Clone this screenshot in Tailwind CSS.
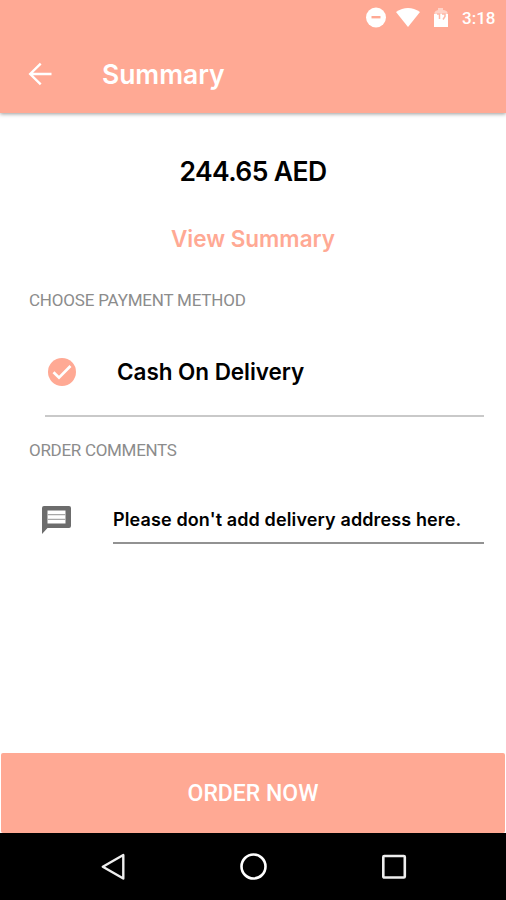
<!DOCTYPE html>
<html lang="en">
<head>
<meta charset="utf-8">
<title>Summary</title>
<script src="https://cdn.jsdelivr.net/npm/@tailwindcss/browser@4"></script>
</head>
<body class="bg-white">
<div class="flex h-[900px] w-[506px] flex-col overflow-hidden bg-white font-['Roboto',sans-serif] text-black">
  <header class="h-[113px] shrink-0 bg-[#ffa994] text-white shadow-[0_1px_4px_rgba(0,0,0,0.4)]">
    <div class="flex h-9 items-center pl-[366px]">
      <svg class="h-5 w-5 shrink-0 overflow-visible" viewBox="0 0 20 20"><circle cx="10" cy="9.500" r="10" fill="#fff"/><path d="M5.500 9.200h9" stroke="#ffa994" stroke-width="2.400"/></svg>
      <svg class="ml-[9px] h-5 w-[26px] shrink-0" viewBox="0 0 26 20"><path d="M1 4Q13-4 25 4L13 19Z" fill="#fff"/></svg>
      <svg class="ml-[12px] h-5 w-4 shrink-0" viewBox="0 0 16 20"><path d="M1.500 7V4.500Q2 2.500 5 2V0h5v2q4 .5 4.500 2.500V7Z" fill="#ffd2c7"/><path d="M1 6h14v13H1Z" fill="#fff"/><path d="M4 6h2.500v5M9 6h3v2.500l-2 3" fill="none" stroke="#ffb8a7" stroke-width="1.500"/></svg>
      <span class="ml-[13px] text-[17px] font-medium leading-none">3:18</span>
    </div>
    <div class="flex h-[77px] items-center pl-[28px]">
      <svg class="mb-[2px] h-6 w-6 shrink-0" viewBox="0 0 24 24" fill="none" stroke="#fff" stroke-width="2.400"><path d="M23.500 12H2M12.700 1.700L2.200 12l10.500 10.300"/></svg>
      <h1 class="ml-[50px] font-['Inter',sans-serif] text-[26.500px] font-semibold leading-none tracking-[-0.050px]">Summary</h1>
    </div>
  </header>
  <main class="flex flex-1 flex-col">
    <p class="mt-[42px] text-center font-['Inter',sans-serif] text-[26.500px] font-semibold leading-8 tracking-[-0.600px]">244.65 AED</p>
    <div class="mt-[36px] text-center font-['Inter',sans-serif] text-[22.500px] font-semibold leading-8 text-[#ffa994]"><span>View Summary</span></div>
    <h2 class="mt-[35px] pl-[29px] text-[17px] leading-5 tracking-[-0.200px] text-[#8c8c8c]"><span>CHOOSE PAYMENT METHOD</span></h2>
    <div class="ml-[45px] mr-[22px] mt-[19px] flex h-[88px] items-center border-b-2 border-[#c9c9c9] pl-[3px]">
      <svg class="h-7 w-7 shrink-0" viewBox="0 0 28 28"><circle cx="14" cy="14" r="14" fill="#ffa994"/><path d="M5.500 14.200l5.500 5.500L22.500 8" fill="none" stroke="#fff" stroke-width="2.700"/></svg>
      <span class="ml-[41px] font-['Inter',sans-serif] text-[22.500px] font-semibold leading-none tracking-[-0.050px]">Cash On Delivery</span>
    </div>
    <h2 class="mt-[23px] pl-[29px] text-[17px] leading-5 tracking-[-0.300px] text-[#8c8c8c]"><span>ORDER COMMENTS</span></h2>
    <div class="ml-[42px] mr-[22px] mt-[34px] flex h-[50px]">
      <svg class="mt-[12px] h-7 w-[29px] shrink-0" viewBox="0 0 29 28"><path d="M2 0h25q2 0 2 2v18q0 2-2 2H5.500L0 28V2q0-2 2-2Z" fill="#6c6c6c"/><path d="M5.500 4.500h18v13h-18Z" fill="#fff"/><path d="M5.500 8.700h18M5.500 13.300h18" stroke="#a8a8a8" stroke-width="1.300"/></svg>
      <div class="ml-[42px] flex flex-1 items-center border-b-2 border-[#929292] pt-[4px] font-['Inter',sans-serif] text-[18px] font-semibold leading-none tracking-[0.120px]"><span>Please don't add delivery address here.</span></div>
    </div>
  </main>
  <button class="mx-px h-[80px] shrink-0 rounded-[2px] bg-[#ffa994] pt-[2px] text-[23px] font-medium text-white">ORDER NOW</button>
  <nav class="flex h-[67px] shrink-0 items-center justify-center gap-[113px] bg-black">
    <svg class="h-7 w-7" viewBox="0 0 28 28" fill="none" stroke="#eee" stroke-width="2.400" stroke-linejoin="round"><path d="M25.300 2v23.500L4.800 13.700Z"/></svg>
    <svg class="h-7 w-7" viewBox="0 0 28 28" fill="none" stroke="#fff" stroke-width="2.600"><circle cx="14.500" cy="13.500" r="12"/></svg>
    <svg class="h-7 w-7" viewBox="0 0 28 28" fill="none" stroke="#eee" stroke-width="2.600"><rect x="3.300" y="3" width="21.500" height="21.500" rx="1"/></svg>
  </nav>
</div>
</body>
</html>
